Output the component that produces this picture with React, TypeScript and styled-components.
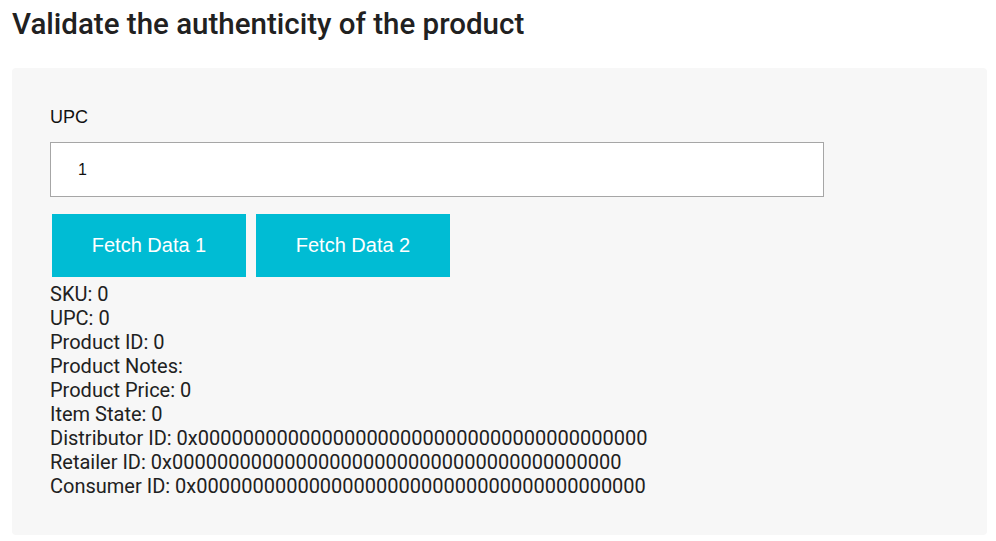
import React from "react";
import styled, { createGlobalStyle } from "styled-components";

const Global = createGlobalStyle`
  body { margin: 0; background: #fff; font-family: Roboto, "Liberation Sans", sans-serif; color: #212121; }
`;

const Page = styled.div`
  padding: 0 9px 6px 12px;
`;

const Title = styled.h2`
  margin: 0;
  padding-top: 6px;
  height: 68px;
  box-sizing: border-box;
  font-family: Roboto, sans-serif;
  font-weight: 500;
  font-size: 29.5px;
  line-height: 36px;
  color: #212121;
`;

const Panel = styled.section`
  background: #f7f7f7;
  border-radius: 4px;
  padding: 36px 38px 40px;
  height: 467px;
  box-sizing: border-box;
`;

const Label = styled.label`
  display: block;
  font-family: "Liberation Sans", Arial, sans-serif;
  font-size: 18px;
  line-height: 26px;
  color: #111;
  margin-bottom: 12px;
`;

const Input = styled.input`
  display: block;
  width: 774px;
  height: 55px;
  box-sizing: border-box;
  border: 1px solid #a6a6a6;
  background: #fff;
  padding: 0 27px;
  font-family: "Liberation Sans", Arial, sans-serif;
  font-size: 16px;
  color: #111;
  outline: none;
`;

const Buttons = styled.div`
  display: flex;
  gap: 10px;
  margin: 17px 0 5px 2px;
`;

const Button = styled.button`
  width: 194px;
  height: 63px;
  border: none;
  background: #00bcd4;
  color: #fff;
  font-family: "Liberation Sans", Arial, sans-serif;
  font-size: 20px;
  cursor: pointer;
`;

const Info = styled.div`
  font-family: Roboto, sans-serif;
  font-size: 20px;
  line-height: 24px;
  color: #212121;
`;

const zero = "0x" + "0".repeat(40);

const rows = [
  "SKU: 0",
  "UPC: 0",
  "Product ID: 0",
  "Product Notes:",
  "Product Price: 0",
  "Item State: 0",
  `Distributor ID: ${zero}`,
  `Retailer ID: ${zero}`,
  `Consumer ID: ${zero}`,
];

export default function App() {
  return (
    <>
      <Global />
      <Page>
        <Title>Validate the authenticity of the product</Title>
        <Panel>
          <Label htmlFor="upc">UPC</Label>
          <Input id="upc" defaultValue="1" />
          <Buttons>
            <Button>Fetch Data 1</Button>
            <Button>Fetch Data 2</Button>
          </Buttons>
          {rows.map((r) => (
            <Info key={r}>{r}</Info>
          ))}
        </Panel>
      </Page>
    </>
  );
}
